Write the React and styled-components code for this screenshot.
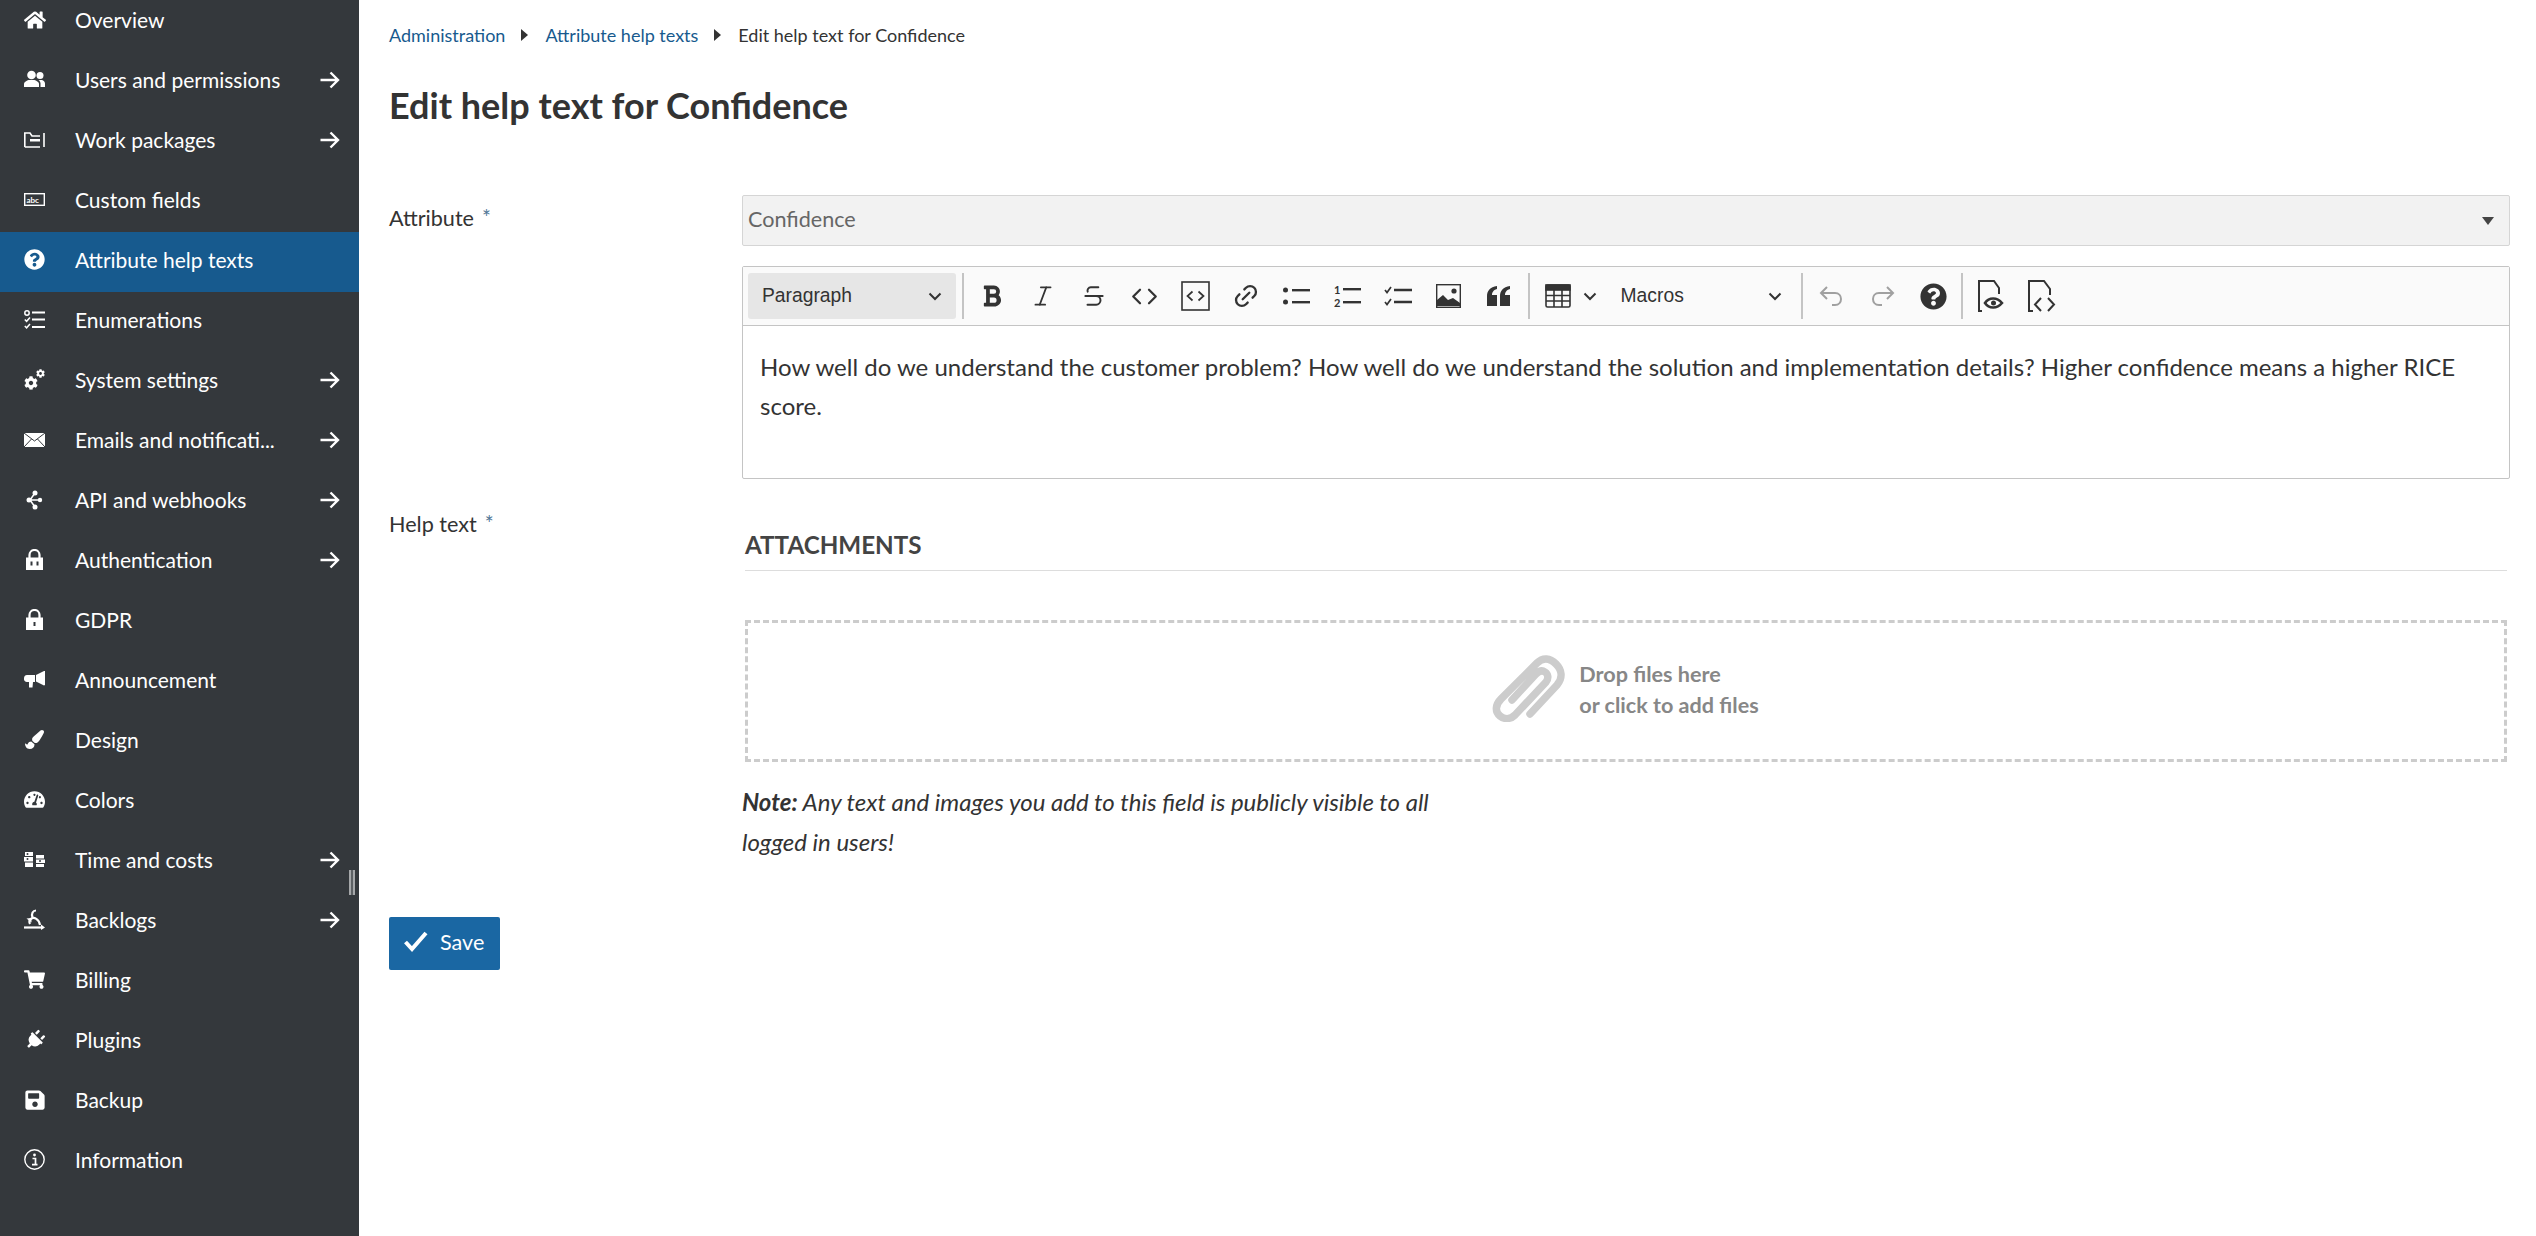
import React from 'react';
import styled, { createGlobalStyle } from 'styled-components';
import { FaHome, FaQuestionCircle, FaCog, FaPaintBrush, FaTachometerAlt, FaShoppingCart, FaPlug, FaSave, FaBold } from 'react-icons/fa';
import { Italic, Strikethrough, Code, Link2 } from 'lucide-react';

const GlobalStyle = createGlobalStyle`
  html, body {
    margin: 0;
    padding: 0;
    height: 100%;
    overflow: hidden;
    background: #fff;
    font-family: Lato, "Liberation Sans", sans-serif;
    color: #333;
  }
  * { box-sizing: border-box; }
`;

const Page = styled.div`
  display: flex;
  height: 100vh;
  overflow: hidden;
`;

const Sidebar = styled.nav`
  position: relative;
  flex: 0 0 359px;
  background: #34383c;
  overflow: hidden;
`;

const NavList = styled.div`
  margin-top: -8px;
  display: flex;
  flex-direction: column;
`;

const NavRow = styled.div`
  display: flex;
  align-items: center;
  height: 60px;
  padding: 0 19px 5px 24px;
  color: #fff;
  font-size: 21px;
  background: ${({ $active }) => ($active ? '#175a8e' : 'transparent')};
`;

const NavIcon = styled.span`
  flex: 0 0 21px;
  width: 21px;
  height: 21px;
  margin-right: 30px;
  display: flex;
  align-items: center;
  justify-content: center;
  svg { display: block; flex: none; }
`;

const NavLabel = styled.span`
  flex: 1;
  min-width: 0;
  white-space: nowrap;
`;

const NavArrow = styled.svg`
  width: 20px;
  height: 18px;
  flex: none;
`;

const ScrollThumb = styled.div`
  position: absolute;
  left: 349px;
  top: 870px;
  width: 6px;
  height: 25px;
  background: linear-gradient(90deg, #a5a7a9 0 40%, #5d6164 40% 60%, #a5a7a9 60% 100%);
`;

const Main = styled.main`
  flex: 1;
  min-width: 0;
  padding: 24px 26px 0 30px;
`;

const Breadcrumbs = styled.div`
  display: flex;
  align-items: center;
  height: 22px;
  font-size: 18px;
  color: #333;
`;

const Crumb = styled.a`
  color: #175a8e;
`;

const CrumbSep = styled.span`
  width: 0;
  height: 0;
  margin: 0 17px 0 16px;
  border-left: 7px solid #333;
  border-top: 6.5px solid transparent;
  border-bottom: 6.5px solid transparent;
`;

const Title = styled.h1`
  margin: 36px 0 0;
  height: 46px;
  line-height: 46px;
  font-size: 36px;
  font-weight: 700;
  color: #333;
`;

const FormRow = styled.div`
  display: grid;
  grid-template-columns: 353px 1fr;
  align-items: start;
  margin-top: ${({ $top }) => $top || 0}px;
`;

const Label = styled.label`
  font-size: 21.6px;
  margin-top: ${({ $top }) => $top || 0}px;
  color: #333;
`;

const Star = styled.span`
  color: #4f7696;
  margin-left: 8px;
  font-size: 21px;
  vertical-align: 1px;
`;

const SelectBox = styled.div`
  position: relative;
  height: 51px;
  display: flex;
  align-items: center;
  padding: 0 0 4px 5px;
  font-size: 21.6px;
  color: #666;
  background: #f2f2f2;
  border: 1px solid #d5d5d5;
  border-radius: 2px;
`;

const SelectCaret = styled.span`
  position: absolute;
  right: 15px;
  top: 21px;
  border-top: 8px solid #444;
  border-left: 6px solid transparent;
  border-right: 6px solid transparent;
`;

const Editor = styled.div`
  margin-top: 20px;
  border: 1px solid #c4c4c4;
  border-radius: 2px;
`;

const Toolbar = styled.div`
  display: flex;
  align-items: center;
  height: 59px;
  padding-left: 5px;
  background: #fafafa;
  border-bottom: 1px solid #c4c4c4;
`;

const DropDown = styled.div`
  display: flex;
  align-items: center;
  justify-content: space-between;
  width: ${({ $w }) => $w}px;
  height: 46px;
  padding: 0 14px 0 ${({ $left }) => $left || 14}px;
  font-family: "Liberation Sans", Arial, sans-serif;
  font-size: 19.3px;
  color: #333;
  background: ${({ $filled }) => ($filled ? '#e6e6e6' : 'transparent')};
  border-radius: 3px;
`;

const ToolSep = styled.span`
  flex: none;
  width: 2px;
  height: 46px;
  margin: 0 ${({ $right }) => $right ?? 3}px 0 ${({ $left }) => $left ?? 6}px;
  background: #c4c4c4;
`;

const ToolBtn = styled.span`
  flex: none;
  display: flex;
  align-items: center;
  justify-content: center;
  width: ${({ $w }) => $w || 50.7}px;
  height: 46px;
  color: ${({ $dim }) => ($dim ? '#a0a0a0' : '#333')};
`;

const Content = styled.div`
  padding: 21px 17px 0;
  height: 152px;
  font-size: 24px;
  line-height: 39px;
  color: #333;
`;

const AttachTitle = styled.h3`
  margin: 48px 3px 0;
  height: 44px;
  line-height: 36px;
  font-size: 24.2px;
  font-weight: 700;
  color: #444;
  text-transform: uppercase;
  border-bottom: 1px solid #ddd;
`;

const DropZone = styled.div`
  margin: 49px 3px 0;
  height: 142px;
  padding: 0 2px 3px 0;
  display: flex;
  align-items: center;
  justify-content: center;
  gap: 14px;
  border: 3px dashed #ccc;
`;

const ClipSlot = styled.span`
  display: flex;
  margin-bottom: 6px;
`;

const DropText = styled.div`
  font-size: 21.6px;
  line-height: 31px;
  font-weight: 700;
  color: #878787;
`;

const Note = styled.p`
  margin: 20px 0 0;
  max-width: 720px;
  font-size: 24px;
  line-height: 40px;
  font-style: italic;
  color: #333;
  b { font-weight: 700; }
`;

const SaveButton = styled.button`
  display: flex;
  align-items: center;
  gap: 12px;
  width: 111px;
  height: 53px;
  margin-top: 55px;
  padding: 0 0 3px 15px;
  border: none;
  border-radius: 2px;
  background: #1a67a3;
  color: #fff;
  font-family: inherit;
  font-size: 21.6px;
`;

const Chevron = () => (
  <svg width="14" height="9" viewBox="0 0 14 9" fill="none" stroke="#333" strokeWidth="2">
    <path d="M1.5 1.5 7 7l5.5-5.5" />
  </svg>
);

const Arrow = () => (
  <NavArrow viewBox="0 0 20 18" fill="none" stroke="#fff" strokeWidth="2.4">
    <path d="M0.5 9h17M10.5 1.5 18 9l-7.5 7.5" />
  </NavArrow>
);

const W = '#fff';
const D = '#34383c';

const UsersIcon = () => (
  <svg width="21" height="21" viewBox="0 0 21 21" fill={W}>
    <circle cx="7.5" cy="6" r="4.3" />
    <path d="M0 18v-3c0-2 3-3.6 4.5-4h6c1.5.4 4.5 2 4.5 4v3z" />
    <circle cx="16" cy="6.5" r="3.5" />
    <path d="M16.5 18v-3.5c0-1.5-1-3-2-3.5H18c1.5.4 3 1.6 3 3.5V18z" />
  </svg>
);

const PackagesIcon = () => (
  <svg width="21" height="16" viewBox="0 0 21 16" fill="none" stroke={W} strokeWidth="1.6">
    <path d="M.8 15V1H6l2 3h8M.8 15H16M20 1v14" />
    <rect x="6" y="7" width="10" height="2.5" fill={W} stroke="none" />
  </svg>
);

const AbcIcon = () => (
  <svg width="21" height="13" viewBox="0 0 21 13">
    <rect x=".7" y=".7" width="19.6" height="11.6" fill="none" stroke={W} strokeWidth="1.4" />
    <text x="2.5" y="9.5" fontSize="8" fontWeight="700" fontFamily="Lato, sans-serif" fill={W}>abc</text>
  </svg>
);

const EnumIcon = () => (
  <svg width="21" height="19" viewBox="0 0 21 19" fill="none" stroke={W} strokeWidth="1.5">
    <circle cx="3" cy="3" r="2.2" />
    <path d="M8 2.5h13M8 9.5h13M8 17h13" strokeWidth="1.9" />
    <path d="M.8 9.5l1.8 1.8L6 7.5M.8 16l1.8 1.8L6 14" />
  </svg>
);

const GearsIcon = () => (
  <svg width="21" height="21" viewBox="0 0 21 21" color={W}>
    <FaCog x="0" y="7" size={14} />
    <FaCog x="12" y="0" size={9} />
  </svg>
);

const MailIcon = () => (
  <svg width="21" height="14" viewBox="0 0 21 14">
    <rect width="21" height="14" fill={W} />
    <path d="M0 0l10.5 8L21 0M0 14l7.5-8M21 14l-7.5-8" fill="none" stroke={D} strokeWidth="1" />
  </svg>
);

const ApiIcon = () => (
  <svg width="17" height="20" viewBox="0 0 17 20" fill="none" stroke={W} strokeWidth="1.5">
    <path d="M9 3 4 10l5 7M4 10h10" />
    <g fill={W} stroke="none">
      <circle cx="9" cy="3" r="2.5" />
      <circle cx="3" cy="10" r="2.5" />
      <circle cx="14" cy="10" r="2.2" />
      <circle cx="9" cy="17" r="2.5" />
    </g>
  </svg>
);

const LockIcon = ({ double }) => (
  <svg width="17" height="21" viewBox="0 0 17 21">
    <path d="M3.5 9V6a5 5 0 0 1 10 0v3" fill="none" stroke={W} strokeWidth="2.2" />
    <rect y="8.5" width="17" height="12.5" fill={W} />
    {double ? (
      <path d="M5.5 12.5v4M11.5 12.5v4" stroke={D} strokeWidth="2" />
    ) : (
      <path d="M8.5 13v4" stroke={D} strokeWidth="2" />
    )}
  </svg>
);

const HornIcon = () => (
  <svg width="21" height="17" viewBox="0 0 21 17" fill={W}>
    <path d="M21 0v14l-1 .5L12 10.5V4l8-4z" />
    <path d="M11 4v7H9l-.5 5.5H5L5 11H3a3 3 0 0 1-3-3.500A3.500 3.500 0 0 1 3 4z" />
  </svg>
);

const BlocksIcon = () => (
  <svg width="21" height="15" viewBox="0 0 21 15" fill={W}>
    <rect x="1" y="0" width="8" height="4" />
    <rect x="0" y="5" width="9" height="4.5" />
    <rect x="1" y="10.5" width="8" height="4.5" />
    <rect x="12" y="3" width="8" height="3.5" />
    <rect x="12" y="7.5" width="9" height="3.5" />
    <rect x="12" y="12" width="8" height="3" />
    <circle cx="3.5" cy="2" r="1" fill={D} />
    <circle cx="3.5" cy="7" r="1" fill={D} />
    <circle cx="16" cy="9" r="1" fill={D} />
  </svg>
);

const BacklogIcon = () => (
  <svg width="21" height="21" viewBox="0 0 21 21" fill="none" stroke={W} strokeWidth="2.2">
    <path d="M0 18.5h18" />
    <path d="M17 15.5l4 3-4 2.5z" fill={W} stroke="none" />
    <path d="M16 16C15 10 10 8 7.5 9.5 5 11 5 13 6 15" />
    <path d="M8.5 8.5C7 4.5 9 1.500 12 1.500" />
    <path d="M2.5 9.5l5-.5v4.500z" fill={W} stroke="none" />
  </svg>
);

const InfoIcon = () => (
  <svg width="21" height="21" viewBox="0 0 21 21" fill="none" stroke={W}>
    <circle cx="10.5" cy="10.5" r="9.7" strokeWidth="1.4" />
    <circle cx="10.5" cy="6" r="1.4" fill={W} stroke="none" />
    <path d="M8.5 9.5h3v6M8 15.7h5.5" strokeWidth="1.7" />
  </svg>
);

const navItems = [
  { label: 'Overview', icon: <FaHome size={22} /> },
  { label: 'Users and permissions', icon: <UsersIcon />, arrow: true },
  { label: 'Work packages', icon: <PackagesIcon />, arrow: true },
  { label: 'Custom fields', icon: <AbcIcon /> },
  { label: 'Attribute help texts', icon: <FaQuestionCircle size={21} />, active: true },
  { label: 'Enumerations', icon: <EnumIcon /> },
  { label: 'System settings', icon: <GearsIcon />, arrow: true },
  { label: 'Emails and notificati...', icon: <MailIcon />, arrow: true },
  { label: 'API and webhooks', icon: <ApiIcon />, arrow: true },
  { label: 'Authentication', icon: <LockIcon double />, arrow: true },
  { label: 'GDPR', icon: <LockIcon /> },
  { label: 'Announcement', icon: <HornIcon /> },
  { label: 'Design', icon: <FaPaintBrush size={19} /> },
  { label: 'Colors', icon: <FaTachometerAlt size={21} /> },
  { label: 'Time and costs', icon: <BlocksIcon />, arrow: true },
  { label: 'Backlogs', icon: <BacklogIcon />, arrow: true },
  { label: 'Billing', icon: <FaShoppingCart size={21} /> },
  { label: 'Plugins', icon: <FaPlug size={20} style={{ transform: 'rotate(45deg)' }} /> },
  { label: 'Backup', icon: <FaSave size={22} /> },
  { label: 'Information', icon: <InfoIcon /> },
];

const CodeBlockIcon = () => (
  <svg width="29" height="30" viewBox="0 0 29 30" fill="none" stroke="#333">
    <rect x="1" y="1" width="27" height="28" strokeWidth="1.6" />
    <path d="M11.5 10.5 6.5 15l5 4.5M17.5 10.5l5 4.5-5 4.5" strokeWidth="1.7" />
  </svg>
);

const BulletIcon = () => (
  <svg width="27" height="20" viewBox="0 0 27 20" fill="#333">
    <circle cx="2.5" cy="4" r="2.5" />
    <circle cx="2.5" cy="16" r="2.5" />
    <rect x="9" y="3" width="18" height="2.4" />
    <rect x="9" y="15" width="18" height="2.4" />
  </svg>
);

const NumberIcon = () => (
  <svg width="27" height="24" viewBox="0 0 27 24" fill="#333">
    <text x="0" y="10" fontSize="11" fontWeight="700" fontFamily="Lato, sans-serif">1</text>
    <text x="0" y="23" fontSize="11" fontWeight="700" fontFamily="Lato, sans-serif">2</text>
    <rect x="9" y="4" width="18" height="2.4" />
    <rect x="9" y="17" width="18" height="2.4" />
  </svg>
);

const TodoIcon = () => (
  <svg width="28" height="20" viewBox="0 0 28 20" fill="none" stroke="#333">
    <path d="M1 4l2 2.5L7 1M1 16l2 2.5L7 13" strokeWidth="1.7" />
    <path d="M10 4h18M10 16h18" strokeWidth="2.4" />
  </svg>
);

const ImageIcon = () => (
  <svg width="25" height="24" viewBox="0 0 25 24">
    <rect x=".7" y=".7" width="23.6" height="22.6" fill="none" stroke="#333" strokeWidth="1.4" />
    <path d="M1 22v-6l6-5 5 5 5-2 7 5v3z" fill="#333" />
    <circle cx="18" cy="7" r="2.6" fill="#333" />
  </svg>
);

const QuoteIcon = () => (
  <svg width="24" height="20" viewBox="0 0 24 20" fill="#333">
    <path d="M0 20V10C0 5 3 1 10 0v3C6 4 5 7 5 9h5v11zM13 20V10c0-5 3-9 10-10v3c-4 1-5 4-5 6h5v11z" />
  </svg>
);

const TableIcon = () => (
  <svg width="26" height="24" viewBox="0 0 26 24" fill="none" stroke="#333" strokeWidth="1.6">
    <rect x="1" y="1" width="24" height="22" rx="1.5" />
    <rect x="1" y="1" width="24" height="5" fill="#333" />
    <path d="M9 6v17M17 6v17M1 11.5h24M1 17h24" />
  </svg>
);

const UndoIcon = ({ flip }) => (
  <svg width="25" height="22" viewBox="0 0 25 22" fill="none" stroke="#a0a0a0" strokeWidth="2" style={flip ? { transform: 'scaleX(-1)' } : undefined}>
    <path d="M8 2 2 8l6 6M2 8h14c8 0 8 12 0 12h-3" />
  </svg>
);

const PreviewIcon = () => (
  <svg width="28" height="32" viewBox="0 0 28 32" fill="none" stroke="#333" strokeWidth="2">
    <path d="M5 31H2V1h15l5 7v6" />
    <path d="M8 23c4-6 12-6 17 0-5 6-13 6-17 0z" fill="#fff" strokeWidth="2.6" />
    <circle cx="16.5" cy="23" r="2.5" fill="#333" stroke="none" />
  </svg>
);

const SourceIcon = () => (
  <svg width="30" height="32" viewBox="0 0 30 32" fill="none" stroke="#333" strokeWidth="2">
    <path d="M6 31H2V1h15l6 8v6" />
    <path d="M14 18l-6 6.5 6 6.5M21 18l6 6.5-6 6.5" />
  </svg>
);

const PaperClip = () => (
  <svg width="74" height="70" viewBox="0 0 74 70" fill="none" stroke="#ccc" strokeWidth="7.5" strokeLinecap="round">
    <path d="M39 62 66 33c6-7 5-15-1-21-6-6-13-7-19-1L10 47c-6 6-6 13-1 17 5 4 11 3 15-1l31-33c3-4 2-8-1-10-3-2-6-1-9 2L21 48" />
  </svg>
);

const SaveCheck = () => (
  <svg width="24" height="22" viewBox="0 0 24 22" fill="none" stroke="#fff" strokeWidth="4">
    <path d="M1.5 11 8 18 22 2" />
  </svg>
);

export default function App() {
  return (
    <Page>
      <GlobalStyle />
      <Sidebar>
        <NavList>
          {navItems.map((item) => (
            <NavRow key={item.label} $active={item.active}>
              <NavIcon>{item.icon}</NavIcon>
              <NavLabel>{item.label}</NavLabel>
              {item.arrow && <Arrow />}
            </NavRow>
          ))}
        </NavList>
        <ScrollThumb />
      </Sidebar>
      <Main>
        <Breadcrumbs>
          <Crumb>Administration</Crumb>
          <CrumbSep />
          <Crumb>Attribute help texts</Crumb>
          <CrumbSep />
          <span>Edit help text for Confidence</span>
        </Breadcrumbs>
        <Title>Edit help text for Confidence</Title>
        <FormRow $top={67}>
          <Label $top={9}>Attribute<Star>*</Star></Label>
          <SelectBox>
            Confidence
            <SelectCaret />
          </SelectBox>
        </FormRow>
        <FormRow>
          <Label $top={264}>Help text<Star>*</Star></Label>
          <div>
            <Editor>
              <Toolbar>
                <DropDown $w={208} $filled>Paragraph<Chevron /></DropDown>
                <ToolSep />
                <ToolBtn><FaBold size={24} /></ToolBtn>
                <ToolBtn><Italic size={26} strokeWidth={1.6} /></ToolBtn>
                <ToolBtn><Strikethrough size={26} strokeWidth={1.8} /></ToolBtn>
                <ToolBtn><Code size={27} strokeWidth={2} /></ToolBtn>
                <ToolBtn><CodeBlockIcon /></ToolBtn>
                <ToolBtn><Link2 size={28} strokeWidth={2} style={{ transform: 'rotate(-45deg)' }} /></ToolBtn>
                <ToolBtn><BulletIcon /></ToolBtn>
                <ToolBtn><NumberIcon /></ToolBtn>
                <ToolBtn><TodoIcon /></ToolBtn>
                <ToolBtn><ImageIcon /></ToolBtn>
                <ToolBtn><QuoteIcon /></ToolBtn>
                <ToolSep $left={3} $right={6} />
                <ToolBtn $w={45}><TableIcon /></ToolBtn>
                <ToolBtn $w={18}><Chevron /></ToolBtn>
                <DropDown $w={197} $left={22}>Macros<Chevron /></DropDown>
                <ToolSep $left={5} $right={4} />
                <ToolBtn $dim><UndoIcon /></ToolBtn>
                <ToolBtn $dim><UndoIcon flip /></ToolBtn>
                <ToolBtn><FaQuestionCircle size={27} color="#333" /></ToolBtn>
                <ToolSep $left={2} $right={3} />
                <ToolBtn><PreviewIcon /></ToolBtn>
                <ToolBtn><SourceIcon /></ToolBtn>
              </Toolbar>
              <Content>
                How well do we understand the customer problem? How well do we understand the solution and implementation details? Higher confidence means a higher RICE score.
              </Content>
            </Editor>
            <AttachTitle>Attachments</AttachTitle>
            <DropZone>
              <ClipSlot><PaperClip /></ClipSlot>
              <DropText>Drop files here<br />or click to add files</DropText>
            </DropZone>
            <Note><b>Note:</b> Any text and images you add to this field is publicly visible to all logged in users!</Note>
          </div>
        </FormRow>
        <SaveButton><SaveCheck />Save</SaveButton>
      </Main>
    </Page>
  );
}
